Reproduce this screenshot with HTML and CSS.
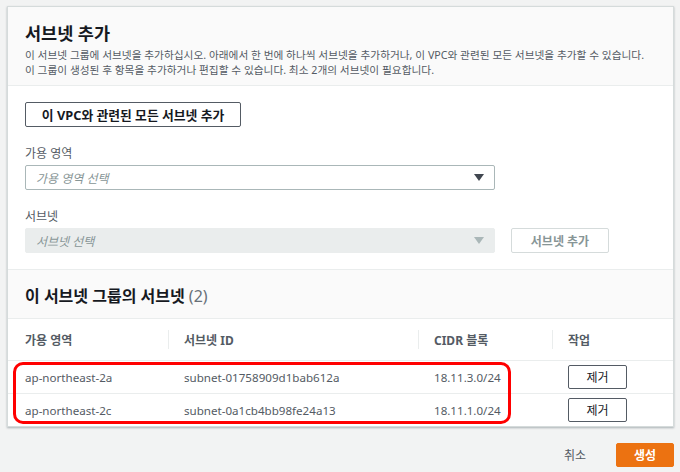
FILE: index.html
```html
<!DOCTYPE html>
<html lang="ko">
<head>
    <meta charset="UTF-8">
    <title>서브넷 추가</title>
    <link rel="stylesheet" href="styles.css">
</head>
<body>
    <div class="page">
        <div class="card">
            <div class="card-head">
                <h2>서브넷 추가</h2>
                <p>이 서브넷 그룹에 서브넷을 추가하십시오. 아래에서 한 번에 하나씩 서브넷을 추가하거나, 이 VPC와 관련된 모든 서브넷을 추가할 수 있습니다.<br>이 그룹이 생성된 후 항목을 추가하거나 편집할 수 있습니다. 최소 2개의 서브넷이 필요합니다.</p>
            </div>
            <div class="card-body">
                <button class="btn btn-all">이 VPC와 관련된 모든 서브넷 추가</button>

                <label class="field-label">가용 영역</label>
                <div class="select">
                    <span>가용 영역 선택</span>
                    <i class="caret"></i>
                </div>

                <label class="field-label">서브넷</label>
                <div class="field-row">
                    <div class="select disabled">
                        <span>서브넷 선택</span>
                        <i class="caret"></i>
                    </div>
                    <button class="btn btn-disabled">서브넷 추가</button>
                </div>
            </div>

            <div class="list-head">
                <h3>이 서브넷 그룹의 서브넷 <span class="count">(2)</span></h3>
            </div>
            <div class="table-wrap">
                <table class="subnets">
                    <thead>
                        <tr>
                            <th class="c1">가용 영역</th>
                            <th class="c2"><span class="sep"></span>서브넷 ID</th>
                            <th class="c3"><span class="sep"></span>CIDR 블록</th>
                            <th class="c4"><span class="sep"></span>작업</th>
                        </tr>
                    </thead>
                    <tbody>
                        <tr>
                            <td>ap-northeast-2a</td>
                            <td>subnet-01758909d1bab612a</td>
                            <td>18.11.3.0/24</td>
                            <td><button class="btn btn-remove">제거</button></td>
                        </tr>
                        <tr>
                            <td>ap-northeast-2c</td>
                            <td>subnet-0a1cb4bb98fe24a13</td>
                            <td>18.11.1.0/24</td>
                            <td><button class="btn btn-remove">제거</button></td>
                        </tr>
                    </tbody>
                </table>
                <div class="highlight"></div>
            </div>
        </div>

        <div class="footer">
            <a class="cancel">취소</a>
            <button class="btn btn-primary">생성</button>
        </div>
    </div>
</body>
</html>
```

FILE: styles.css
```css
body {
    margin: 0;
    background-color: #f2f3f3;
    font-family: 'Noto Sans', 'Noto Sans CJK KR', sans-serif;
    color: #16191f;
}
.page {
    padding: 6px 6px 0 7px;
}
.card {
    background: white;
    border: 1px solid #d5dbdb;
    box-shadow: 0 1px 2px rgba(0, 28, 36, 0.3);
}
.card-head {
    background: #fafafa;
    padding: 14px 17px 12px;
    border-bottom: 1px solid #eaeded;
    height: 52px;
}
.card-head h2 {
    margin: 0 0 3px;
    font-size: 17.5px;
    line-height: 24px;
    font-weight: 700;
}
.card-head p {
    margin: 0;
    font-size: 10.7px;
    line-height: 15px;
    color: #545b64;
}
.card-body {
    padding: 16px 17px 16px;
    border-bottom: 1px solid #eaeded;
}
.btn {
    font-family: inherit;
    font-size: 12px;
    background: white;
    border: 1px solid #545b64;
    border-radius: 2px;
    color: #545b64;
    cursor: pointer;
}
.btn-all {
    display: block;
    width: 216px;
    height: 25px;
    padding: 0;
    font-size: 12.8px;
    font-weight: 700;
    color: #16191f;
}
.field-label {
    display: block;
    font-size: 12px;
    line-height: 16px;
    color: #545b64;
    margin: 19px 0 3px;
}
.select {
    height: 23px;
    border: 1px solid #aab7b8;
    border-radius: 2px;
    display: flex;
    align-items: center;
    justify-content: space-between;
    padding: 0 10px;
    width: 448px;
}
.select span {
    font-size: 12px;
    font-style: italic;
    color: #879596;
}
.caret {
    width: 0;
    height: 0;
    border-left: 5px solid transparent;
    border-right: 5px solid transparent;
    border-top: 7px solid #414750;
}
.select.disabled {
    background: #eaeded;
    border-color: #eaeded;
}
.select.disabled .caret {
    border-top-color: #aab7b8;
}
.field-row {
    display: flex;
    align-items: center;
    gap: 16px;
}
.btn-disabled {
    width: 98px;
    height: 25px;
    border-color: #d5dbdb;
    color: #879596;
    font-weight: 700;
}
.list-head {
    background: #fafafa;
    border-bottom: 1px solid #eaeded;
    height: 48px;
    display: flex;
    align-items: center;
    padding: 0 17px;
}
.list-head h3 {
    margin: 2px 0 0;
    font-size: 16px;
    font-weight: 700;
}
.count {
    font-weight: 400;
    color: #687078;
}
.table-wrap {
    position: relative;
}
.subnets {
    width: 100%;
    border-collapse: collapse;
    font-size: 12px;
}
.subnets th {
    position: relative;
    text-align: left;
    font-weight: 700;
    color: #545b64;
    height: 41px;
    padding: 0 16px;
    border-bottom: 1px solid #eaeded;
}
.subnets th.c1 { width: 127px; padding-left: 17px; }
.subnets th.c2 { width: 218px; }
.subnets th.c3 { width: 102px; }
.sep {
    position: absolute;
    left: 0;
    top: 11px;
    height: 19px;
    border-left: 1px solid #eaeded;
}
.subnets td {
    height: 32px;
    padding: 0 16px;
    font-size: 11.6px;
    color: #545b64;
    border-bottom: 1px solid #eaeded;
}
.subnets td:first-child {
    padding-left: 17px;
}
.subnets tr:last-child td {
    border-bottom: none;
}
.btn-remove {
    width: 59px;
    height: 24px;
    padding: 0;
    color: #16191f;
}
.highlight {
    position: absolute;
    left: 5px;
    top: 43px;
    width: 492px;
    height: 56px;
    border: 3px solid #f00;
    border-radius: 10px;
}
.footer {
    display: flex;
    justify-content: flex-end;
    align-items: center;
    gap: 30px;
    padding: 16px 0 0;
}
.cancel {
    font-size: 12px;
    color: #545b64;
}
.btn-primary {
    width: 58px;
    height: 24px;
    background: #ec7211;
    border-color: #ec7211;
    color: white;
    font-weight: 700;
}
```
